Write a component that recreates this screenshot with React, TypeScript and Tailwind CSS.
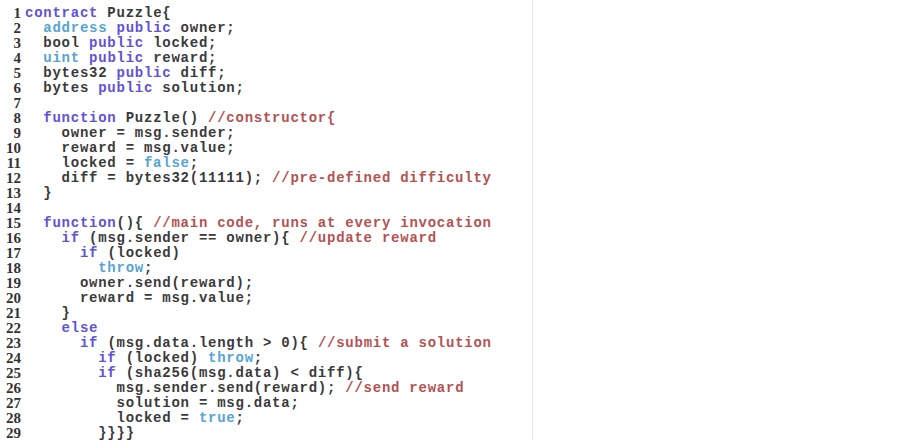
import React from "react";

type Tok = [string, "k" | "t" | "c" | "p"];

// k: keyword (violet), t: type/literal (light blue), c: comment, p: plain
const LINES: Tok[][] = [
    [["contract", "k"], [" Puzzle{", "p"]],
    [["  ", "p"], ["address", "t"], [" ", "p"], ["public", "k"], [" owner;", "p"]],
    [["  bool ", "p"], ["public", "k"], [" locked;", "p"]],
    [["  ", "p"], ["uint", "t"], [" ", "p"], ["public", "k"], [" reward;", "p"]],
    [["  bytes32 ", "p"], ["public", "k"], [" diff;", "p"]],
    [["  bytes ", "p"], ["public", "k"], [" solution;", "p"]],
    [],
    [["  ", "p"], ["function", "k"], [" Puzzle() ", "p"], ["//constructor{", "c"]],
    [["    owner = msg.sender;", "p"]],
    [["    reward = msg.value;", "p"]],
    [["    locked = ", "p"], ["false", "t"], [";", "p"]],
    [["    diff = bytes32(11111); ", "p"], ["//pre-defined difficulty", "c"]],
    [["  }", "p"]],
    [],
    [["  ", "p"], ["function", "k"], ["(){ ", "p"], ["//main code, runs at every invocation", "c"]],
    [["    ", "p"], ["if", "k"], [" (msg.sender == owner){ ", "p"], ["//update reward", "c"]],
    [["      ", "p"], ["if", "k"], [" (locked)", "p"]],
    [["        ", "p"], ["throw", "t"], [";", "p"]],
    [["      owner.send(reward);", "p"]],
    [["      reward = msg.value;", "p"]],
    [["    }", "p"]],
    [["    ", "p"], ["else", "k"]],
    [["      ", "p"], ["if", "k"], [" (msg.data.length > 0){ ", "p"], ["//submit a solution", "c"]],
    [["        ", "p"], ["if", "k"], [" (locked) ", "p"], ["throw", "t"], [";", "p"]],
    [["        ", "p"], ["if", "k"], [" (sha256(msg.data) < diff){", "p"]],
    [["          msg.sender.send(reward); ", "p"], ["//send reward", "c"]],
    [["          solution = msg.data;", "p"]],
    [["          locked = ", "p"], ["true", "t"], [";", "p"]],
    [["        }}}}", "p"]],
];

const tokClass = {
    k: "text-[#6152d6]",
    t: "text-[#56a4d4]",
    c: "text-[#b45252]",
    p: "text-[#3a3a3a]",
};

const App = () => {
    return (
        <div className="flex h-[440px] w-[922px] bg-white">
            <div className="w-[533px] border-r border-[#e6e6e6] pt-[6px]">
                {LINES.map((line, i) => (
                    <div key={i} className="flex h-[15px] items-center leading-[15px]">
                        <span className="w-[21px] shrink-0 text-right font-['Liberation_Serif',serif] text-[15px] font-bold text-[#333333]">
                            {i + 1}
                        </span>
                        <span className="ml-[4px] whitespace-pre font-['Liberation_Mono',monospace] text-[14px] font-bold tracking-[0.75px]">
                            {line.map(([text, kind], j) => (
                                <span key={j} className={tokClass[kind]}>
                                    {text}
                                </span>
                            ))}
                        </span>
                    </div>
                ))}
            </div>
            <div className="flex-1" />
        </div>
    );
};

export default App;
